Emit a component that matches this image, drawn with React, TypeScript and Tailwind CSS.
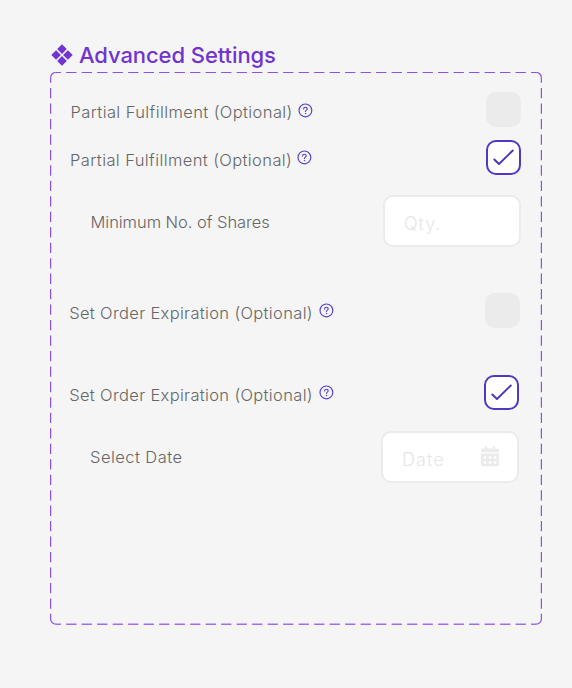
import type { ReactNode } from "react";

function HelpIcon() {
  return (
    <svg className="size-[15px] shrink-0" viewBox="0 0 15 15" fill="none" stroke="#5440cf" strokeWidth="1.15" strokeLinecap="round">
      <circle cx="7.4" cy="7.4" r="6.4" />
      <path d="M5.6 6c0-1.1.8-1.8 1.8-1.8s1.8.7 1.8 1.7c0 1.2-1.8 1.3-1.8 2.6" />
      <circle cx="7.4" cy="10.5" r="0.3" fill="#5440cf" strokeWidth="0.8" />
    </svg>
  );
}

function Checkbox({ checked = false }: { checked?: boolean }) {
  if (!checked) return <div className="size-[35px] shrink-0 rounded-[10px] bg-[#ebebeb]" />;
  return (
    <div className="flex size-[35px] shrink-0 items-center justify-center rounded-[10px] border-2 border-[#5038c4] bg-white">
      <svg className="h-[31px] w-[31px]" viewBox="0 0 31 31" fill="none" stroke="#4b35bd" strokeWidth="1.9" strokeLinecap="round" strokeLinejoin="round">
        <path d="M6.3 17.5 11 22 24.8 8.5" />
      </svg>
    </div>
  );
}

function Label({ children, className }: { children: ReactNode; className: string }) {
  return <span className={`whitespace-nowrap text-[16.5px] leading-[20px] font-light text-[#666666] ${className}`}>{children}</span>;
}

function CalendarIcon() {
  return (
    <svg className="h-[21px] w-[18px]" viewBox="0 0 18 21" fill="#ebebeb">
      <path d="M0 6.3V4.4C0 3.3.8 2.5 1.9 2.5H4V.9C4 .4 4.3 0 4.8 0h.5c.5 0 .8.4.8.9v1.6H12V.9c0-.5.3-.9.8-.9h.5c.5 0 .8.4.8.9v1.6h2c1.1 0 1.9.8 1.9 1.9v1.9z" />
      <path fillRule="evenodd" d="M0 7.6h18v10.8c0 1.1-.8 1.9-1.9 1.9H1.9C.8 20.3 0 19.5 0 18.4zM2.8 10.2v2.5h2.5v-2.5zm5 0v2.5h2.5v-2.5zm5 0v2.5h2.5v-2.5zM2.8 15.2v2.5h2.5v-2.5zm5 0v2.5h2.5v-2.5zm5 0v2.5h2.5v-2.5z" />
    </svg>
  );
}

function Field({ text, className, children }: { text: string; className: string; children?: ReactNode }) {
  return (
    <div className="flex h-[52px] w-[138px] items-center justify-between rounded-[10px] border-2 border-[#ebebeb] bg-white pr-[18px] pl-[19px]">
      <span className={`pt-1.5 text-[18px] leading-[22px] font-light text-[#e6e6e6] ${className}`}>{text}</span>
      {children}
    </div>
  );
}

/* Dashed outline: every side starts and ends on a half dash, so the corners stay solid. */
function DashedOutline() {
  return (
    <svg className="pointer-events-none absolute inset-0 h-full w-full" viewBox="0 0 492 553" fill="none" stroke="#8d4df0" strokeWidth="1.2">
      <g strokeDasharray="10.3 5.197" strokeDashoffset="5.15">
        <path d="M5.8 .5H486.2" />
        <path d="M5.8 552.2H486.2" stroke="#a06cf5" strokeWidth="1.5" />
      </g>
      <g strokeDasharray="10.3 5.166" strokeDashoffset="5.15">
        <path d="M.6 5.7V547" />
        <path d="M491.4 5.7V547" />
      </g>
      <path d="M.6 5.7A5.2 5.2 0 0 1 5.8 .5M486.2 .5a5.2 5.2 0 0 1 5.2 5.2M491.4 547a5.2 5.2 0 0 1-5.2 5.2M5.8 552.2A5.2 5.2 0 0 1 .6 547" />
    </svg>
  );
}

export default function App() {
  return (
    <main className="h-[688px] w-[572px] overflow-hidden bg-[#f5f5f5] pt-[42px] pl-[50px] font-['Inter','Liberation_Sans',sans-serif]">
      <h1 className="flex h-[30px] items-center gap-[6.5px] text-[#7133d1]">
        <svg className="mt-[-5px] ml-[0.5px] size-[22px]" viewBox="0 0 22 22" fill="currentColor">
          <path d="M11 .3l4.8 4.8L11 9.9 6.2 5.1zM5.1 6.2 9.9 11l-4.8 4.8L.3 11zM16.9 6.2l4.8 4.8-4.8 4.8-4.8-4.8zM11 12.1l4.8 4.8-4.8 4.8-4.8-4.8z" />
        </svg>
        <span className="mt-[-4px] text-[22px] leading-[26px] font-medium tracking-[-0.08px] whitespace-nowrap">Advanced Settings</span>
      </h1>
      <section className="relative h-[553px] w-[492px] pt-[20.4px]">
        <DashedOutline />
        <div className="flex h-12 items-start justify-between pr-[21px] pl-[20.5px]">
          <div className="flex items-start gap-1.5 pt-[11px]">
            <Label className="mt-[-1px] w-[221.5px] tracking-[0.4px]">Partial Fulfillment (Optional)</Label>
            <HelpIcon />
          </div>
          <Checkbox />
        </div>
        <div className="flex h-[54.6px] items-start justify-between pr-[21px] pl-[20px]">
          <div className="flex items-start gap-1.5 pt-[9.5px]">
            <Label className="w-[221px] tracking-[0.4px]">Partial Fulfillment (Optional)</Label>
            <HelpIcon />
          </div>
          <Checkbox checked />
        </div>
        <div className="flex h-[98px] items-start justify-between pr-[21px] pl-[40.5px]">
          <Label className="pt-[17px] tracking-[-0.04px]">Minimum No. of Shares</Label>
          <Field text="Qty." className="tracking-[0.9px]" />
        </div>
        <div className="flex h-[82px] items-start justify-between pr-[22px] pl-[19.2px]">
          <div className="flex items-start gap-1.5 pt-[10px]">
            <Label className="w-[243.4px] tracking-[0.34px]">Set Order Expiration (Optional)</Label>
            <HelpIcon />
          </div>
          <Checkbox />
        </div>
        <div className="flex h-14 items-start justify-between pr-[22.6px] pl-[19.2px]">
          <div className="flex items-start gap-1.5 pt-[10px]">
            <Label className="w-[243.4px] tracking-[0.34px]">Set Order Expiration (Optional)</Label>
            <HelpIcon />
          </div>
          <Checkbox checked />
        </div>
        <div className="flex items-start justify-between pr-[23px] pl-[40px]">
          <Label className="pt-[16px] tracking-[0.45px]">Select Date</Label>
          <Field text="Date" className="tracking-[1.1px]"><CalendarIcon /></Field>
        </div>
      </section>
    </main>
  );
}
